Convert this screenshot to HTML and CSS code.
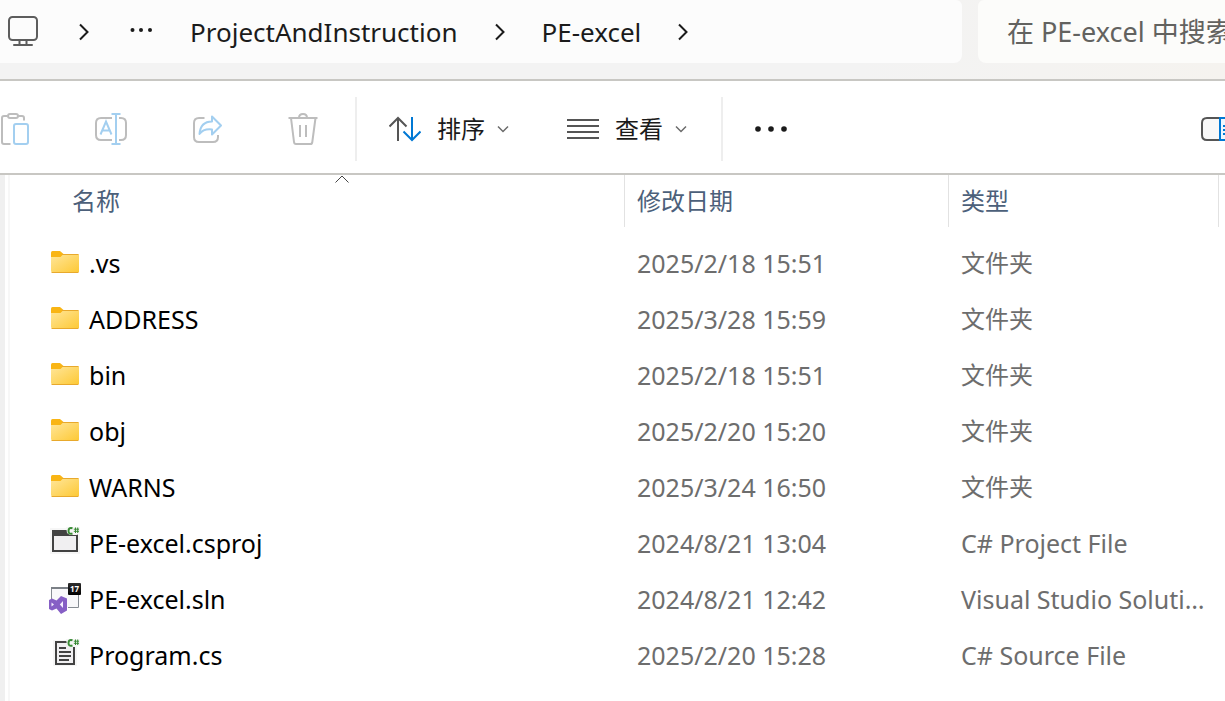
FILE: index.html
```html
<!DOCTYPE html>
<html lang="zh-CN">
<head>
<meta charset="utf-8">
<title>PE-excel</title>
<link rel="stylesheet" href="styles.css">
</head>
<body>
<svg class="defs" aria-hidden="true">
  <defs>
    <linearGradient id="folder-fill" x1="0" y1="0" x2="1" y2="1">
      <stop offset="0" stop-color="#ffe69a"/>
      <stop offset="1" stop-color="#fdc936"/>
    </linearGradient>
    <linearGradient id="badge-fill" x1="0" y1="0" x2="0" y2="1">
      <stop offset="0" stop-color="#2e2e2e"/>
      <stop offset="1" stop-color="#000"/>
    </linearGradient>
    <symbol id="folder" viewBox="0 0 32 32">
      <path d="M2 9V5.500Q2 4 3.500 4H11L14.500 7V9.500L11.500 11H2Z" fill="#f9b514"/>
      <path d="M2 10H11.500L14 7.500H30V25H3Q2 25 2 24Z" fill="url(#folder-fill)"/>
      <path d="M13 7.500H29.500M2.500 25.500H29.500" stroke="#e8a92c" fill="none"/>
    </symbol>
    <symbol id="chevron-right" viewBox="0 0 12 20">
      <path d="M2 2.500L9.500 10L2 17.500" fill="none" stroke="#1b1b1b" stroke-width="2"/>
    </symbol>
    <symbol id="chevron-down" viewBox="0 0 12 8">
      <path d="M1 1.500L6 6.500L11 1.500" fill="none" stroke="#6b6b6b" stroke-width="1.500"/>
    </symbol>
    <symbol id="csharp" viewBox="0 0 12 8">
      <path d="M5.500 1.300Q1.500 .2 1.500 4Q1.500 7.800 5.500 6.500" fill="none" stroke="#388a34" stroke-width="2"/>
      <path d="M8.500 .5V6M10.700 .5V6M6.800 2.200H12M6.800 4.300H12" stroke="#388a34" fill="none"/>
    </symbol>
  </defs>
</svg>

<header class="topbar">
  <nav class="address" aria-label="地址栏">
    <button class="crumb" aria-label="此电脑">
      <svg width="35" height="32" viewBox="7 14 35 32" fill="none" stroke="#5d5d5d" stroke-width="2">
        <rect x="9" y="15" width="28" height="23" rx="3.500"/>
        <path d="M19.500 38V43M26.500 38V43M14 43H32" stroke-linecap="round"/>
      </svg>
    </button>
    <svg width="12" height="20"><use href="#chevron-right"/></svg>
    <button class="crumb" aria-label="更多路径">
      <svg width="28" height="32" viewBox="126 15 28 32" fill="#1b1b1b"><circle cx="132.500" cy="29" r="2"/><circle cx="141" cy="29" r="2"/><circle cx="150" cy="29" r="2"/></svg>
    </button>
    <button class="crumb">ProjectAndInstruction</button>
    <svg width="12" height="20"><use href="#chevron-right"/></svg>
    <button class="crumb">PE-excel</button>
    <svg width="12" height="20"><use href="#chevron-right"/></svg>
  </nav>
  <input class="search" type="text" aria-label="搜索" placeholder="在 PE-excel 中搜索">
</header>

<div class="toolbar" role="toolbar" aria-label="命令栏">
  <div class="actions">
    <button class="tool" aria-label="粘贴" disabled>
      <svg width="32" height="32" viewBox="0 113 32 32" fill="none" stroke="#bdbdbd" stroke-width="2">
        <path d="M7.500 116H4Q2 116 2 118V142Q2 144 4 144H10.500M17.500 116H22Q24 116 24 118V120.500"/>
        <rect x="8" y="114" width="10" height="4" rx="2"/>
        <rect x="14" y="124" width="14" height="20" rx="2" stroke="#a3cff0"/>
      </svg>
    </button>
    <button class="tool" aria-label="重命名" disabled>
      <svg width="32" height="32" viewBox="96 113 32 32" overflow="visible" fill="none" stroke="#bdbdbd" stroke-width="2">
        <path d="M112 118H101Q96 118 96 123V135Q96 140 101 140H112M119 118H121Q126 118 126 123V135Q126 140 121 140H119"/>
        <path d="M100.500 134.500L106 121.500L111.500 134.500M102.500 130.500H109.500M116 114V144M111.500 114H120.500M111.500 144H120.500" stroke="#a3cff0"/>
      </svg>
    </button>
    <button class="tool" aria-label="共享" disabled>
      <svg width="32" height="32" viewBox="192 113 32 32" fill="none" stroke="#bdbdbd" stroke-width="2">
        <path d="M204.500 118H199Q194 118 194 123V137Q194 142 199 142H213Q218 142 218 137V135"/>
        <path d="M212 116.500L221 125.500L212 134.500V129.500Q203.500 128.500 199.500 134Q200.500 121.500 212 121.500Z" stroke="#a3cff0" stroke-linejoin="round"/>
      </svg>
    </button>
    <button class="tool" aria-label="删除" disabled>
      <svg width="32" height="32" viewBox="288 113 32 32" fill="none" stroke="#bdbdbd" stroke-width="2">
        <path d="M288.500 118H317.500M291 118L294 142Q294.200 144 296 144H310.500Q312 144 312.300 142L315.500 118M299 118Q299 114 303 114Q307 114 307 118M300 125V137M306 125V137"/>
      </svg>
    </button>
  </div>
  <div class="menus">
    <button class="menu">
      <svg width="32" height="32" viewBox="389 113 32 32" fill="none" stroke="#555" stroke-width="2">
        <path d="M389.500 126.500L398 118L406.500 126.500M398 118V141"/>
        <path d="M403.500 131.500L412 140L420.500 131.500M412 140V117" stroke="#0078d4"/>
      </svg>
      <span class="menu-label">排序</span>
      <svg width="12" height="8"><use href="#chevron-down"/></svg>
    </button>
    <button class="menu">
      <svg width="32" height="32" viewBox="567 113 32 32" fill="none" stroke="#555" stroke-width="2"><path d="M567 120H599M567 126H599M567 132H599M567 138H599"/></svg>
      <span class="menu-label">查看</span>
      <svg width="12" height="8"><use href="#chevron-down"/></svg>
    </button>
  </div>
  <button class="tool more" aria-label="查看更多">
    <svg width="32" height="32" viewBox="755 113 32 32" fill="#1b1b1b"><circle cx="758" cy="129" r="2.800"/><circle cx="771" cy="129" r="2.800"/><circle cx="784" cy="129" r="2.800"/></svg>
  </button>
  <button class="tool preview" aria-label="预览窗格">
    <svg width="24" height="32" viewBox="1201 113 24 32" fill="#f8f8f8" stroke="#555" stroke-width="2">
      <path d="M1220 118H1207Q1202 118 1202 123V135Q1202 140 1207 140H1220"/>
      <path d="M1226 118H1220V140H1226" fill="#eef7ff" stroke="#0078d4"/>
      <path d="M1223 126H1226M1223 130H1226M1223 134H1226" stroke="#0078d4"/>
    </svg>
  </button>
</div>

<main class="content">
  <table class="files">
    <colgroup><col class="col-name"><col class="col-date"><col class="col-type"><col class="col-rest"></colgroup>
    <thead>
      <tr>
        <th class="name-head" scope="col"><button class="head">名称
          <svg class="sort-mark" width="16" height="10" viewBox="0 0 16 10" fill="none" stroke="#444"><path d="M1.500 7.500L8 1L14.500 7.500"/></svg>
        </button></th>
        <th scope="col"><button class="head">修改日期</button></th>
        <th scope="col"><button class="head">类型</button></th>
        <td></td>
      </tr>
    </thead>
    <tbody>
      <tr><td><div class="file"><svg class="icon"><use href="#folder"/></svg>.vs</div></td><td>2025/2/18 15:51</td><td class="cjk">文件夹</td><td></td></tr>
      <tr><td><div class="file"><svg class="icon"><use href="#folder"/></svg>ADDRESS</div></td><td>2025/3/28 15:59</td><td class="cjk">文件夹</td><td></td></tr>
      <tr><td><div class="file"><svg class="icon"><use href="#folder"/></svg>bin</div></td><td>2025/2/18 15:51</td><td class="cjk">文件夹</td><td></td></tr>
      <tr><td><div class="file"><svg class="icon"><use href="#folder"/></svg>obj</div></td><td>2025/2/20 15:20</td><td class="cjk">文件夹</td><td></td></tr>
      <tr><td><div class="file"><svg class="icon"><use href="#folder"/></svg>WARNS</div></td><td>2025/3/24 16:50</td><td class="cjk">文件夹</td><td></td></tr>
      <tr><td><div class="file">
        <svg class="icon" viewBox="49 528 32 32">
          <rect x="50" y="529" width="30" height="26" fill="#f6f6f6"/>
          <rect x="53" y="532" width="24" height="20" fill="#f0eff1" stroke="#424242" stroke-width="2"/>
          <path d="M52 531H78V537H52Z" fill="#424242"/>
          <path d="M66 527H80V534L77 536H70L67 534Z" fill="#f6f6f6"/>
          <use href="#csharp" x="67" y="528" width="12" height="8"/>
        </svg>PE-excel.csproj</div></td><td>2024/8/21 13:04</td><td>C# Project File</td><td></td></tr>
      <tr><td><div class="file">
        <svg class="icon" viewBox="49 583 32 32">
          <path d="M51.500 600V587.500H78.500V607.500H68" fill="#f8f8fa" stroke="#868c93"/>
          <path d="M51 588H69" stroke="#7b8086" stroke-width="2"/>
          <path d="M49 600L52 598.500L56.500 600.500L61 596L67 598.500V610.500L61 614L56.500 608.500L52 610.500L49 609Z" fill="#865fc5"/>
          <path d="M51.500 602.500L54 604.500L51.500 606.500ZM63 601V608L59.800 604.500Z" fill="#f5efff"/>
          <rect x="68" y="583" width="13" height="12" rx="1" fill="url(#badge-fill)"/>
          <text class="badge-text" x="70" y="592">17</text>
        </svg>PE-excel.sln</div></td><td>2024/8/21 12:42</td><td>Visual Studio Solution</td><td></td></tr>
      <tr><td><div class="file">
        <svg class="icon" viewBox="49 640 32 32">
          <rect x="53" y="641" width="24" height="26" fill="#f6f6f6"/>
          <path d="M67 643H56V665H74V648" fill="#f0eff1" stroke="#424242" stroke-width="2"/>
          <path d="M59 649H66M59 653H71M59 657H71M59 661H69" stroke="#424242" stroke-width="2"/>
          <path d="M66 640H80V646L77 648H70L67 646Z" fill="#f6f6f6"/>
          <use href="#csharp" x="67" y="640" width="12" height="8"/>
        </svg>Program.cs</div></td><td>2025/2/20 15:28</td><td>C# Source File</td><td></td></tr>
    </tbody>
  </table>
</main>
</body>
</html>
```
FILE: styles.css
```css
* {
  box-sizing: border-box;
}

body {
  margin: 0;
  background: #fff;
  color: #000;
  font-family: "Noto Sans", "Noto Sans CJK SC", sans-serif;
  font-size: 25px;
  line-height: 32px;
  display: flex;
  flex-direction: column;
  min-height: 100vh;
  overflow-x: hidden;
}

button,
input {
  margin: 0;
  padding: 0;
  border: 0;
  background: none;
  color: inherit;
  font: inherit;
}

svg {
  display: block;
  flex: none;
}

.defs {
  position: absolute;
  width: 0;
  height: 0;
}

.topbar {
  display: flex;
  gap: 16px;
  padding-bottom: 16px;
  background: linear-gradient(90deg, #f3f3f3 70%, #f5f3ef);
  border-bottom: 2px solid #c8c7c3;
}

.address {
  display: flex;
  flex: 1;
  align-items: center;
  gap: 36px;
  height: 63px;
  padding-left: 7px;
  background: #fcfcfc;
  border-radius: 0 6px 8px 0;
  font-size: 26px;
}

.crumb {
  color: #1b1b1b;
  white-space: nowrap;
}

.search {
  width: 247px;
  padding-left: 29px;
  background: #fcfcfa;
  border-radius: 6px 0 0 8px;
  font-size: 27px;
}

.search::placeholder {
  color: #62625f;
  opacity: 1;
}

.toolbar {
  display: flex;
  align-items: stretch;
  padding: 16px 0 12px;
  border-bottom: 2px solid #c8c7c3;
}

.tool,
.menu {
  min-height: 64px;
}

.actions {
  display: flex;
  gap: 64px;
  padding-right: 35px;
}

.menus {
  display: flex;
  gap: 58px;
  padding: 0 34px 0 32px;
  border: solid #eee;
  border-width: 0 2px;
}

.menu {
  display: flex;
  align-items: center;
  color: #1b1b1b;
  font-size: 24px;
}

.menu-label {
  padding: 0 12px 0 16px;
}

.more {
  margin-left: 32px;
}

.preview {
  margin-left: auto;
}

.content {
  flex: 1;
  margin-left: 8px;
  border-left: 2px solid #f7f7f7;
  box-shadow: -3px 0 #fff, -8px 0 #f0f0f0;
}

.files {
  width: 100%;
  table-layout: fixed;
  border-collapse: separate;
  border-spacing: 0;
}

.col-date {
  width: 324px;
}

.col-type {
  width: 270px;
}

.col-rest {
  width: 6px;
}

th {
  padding: 0 0 8px;
  text-align: left;
  font-weight: 400;
}

.name-head {
  padding-left: 50px;
}

.head {
  position: relative;
  display: block;
  width: 100%;
  height: 52px;
  padding-left: 12px;
  border-right: 1px solid #e2e2e2;
  color: #4c607a;
  font-size: 24px;
  text-align: left;
}

.sort-mark {
  position: absolute;
  top: 0;
  left: calc(50% - 8px);
}

td {
  padding: 0 12px;
  color: #6d6d6d;
  white-space: nowrap;
  overflow: hidden;
  text-overflow: ellipsis;
}

tbody td {
  height: 56px;
}

td:first-child {
  padding-left: 39px;
}

td:last-child {
  padding: 0;
}

.cjk {
  font-size: 24px;
}

.file {
  display: flex;
  align-items: center;
  gap: 8px;
  color: #000;
}

.icon {
  width: 32px;
  height: 32px;
}

.badge-text {
  fill: #fff;
  font-size: 8px;
  font-weight: 700;
}
```
